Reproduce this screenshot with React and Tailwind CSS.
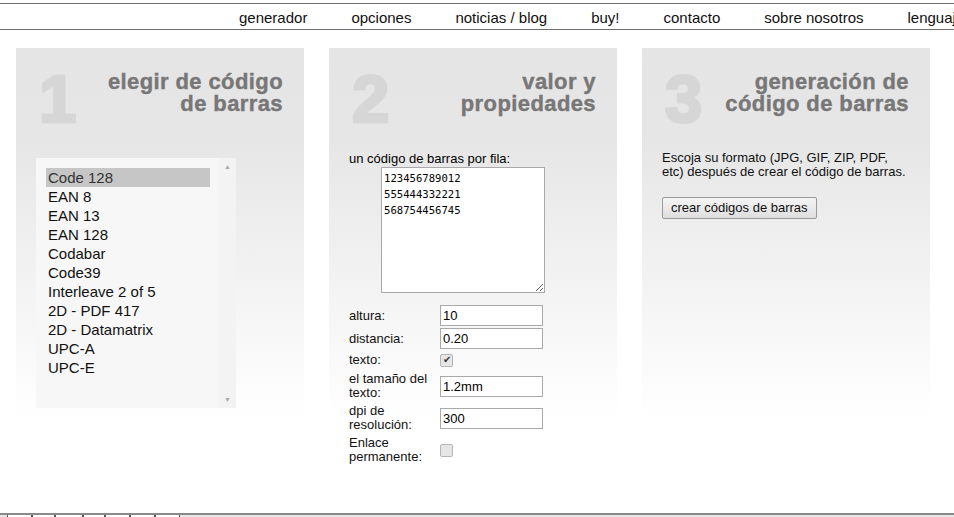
const nav = ['generador', 'opciones', 'noticias / blog', 'buy!', 'contacto', 'sobre nosotros', 'lenguaje'];

const codes = ['Code 128', 'EAN 8', 'EAN 13', 'EAN 128', 'Codabar', 'Code39', 'Interleave 2 of 5', '2D - PDF 417', '2D - Datamatrix', 'UPC-A', 'UPC-E'];

function Panel({ num, title, children }) {
  return (
    <div className="w-[288px] shrink-0 bg-[linear-gradient(#e5e5e5,#e6e6e6_90px,#ffffff_372px)] min-h-[372px]">
      <div className="flex items-start justify-between h-[102px] pl-[21px] pr-[21px] pt-[17px]">
        <div className="text-[67px] leading-none font-bold text-[#d6d6d6] [-webkit-text-stroke:3px_#d6d6d6] pl-[2px]">{num}</div>
        <div className="text-right text-[22px] leading-[22px] font-bold tracking-[0.4px] text-[#777] pt-[6px] [-webkit-text-stroke:0.4px_#777]">
          {title.map((t) => <div key={t}>{t}</div>)}
        </div>
      </div>
      {children}
    </div>
  );
}

function Input({ value }) {
  return (
    <div className="w-[103px] h-[21px] border border-[#a9a9a9] bg-white px-[2px] text-[13px] leading-[19px] text-black">{value}</div>
  );
}

function Check({ checked }) {
  return (
    <div className="w-[13px] h-[13px] rounded-[2px] border border-[#b5b5b5] bg-[#e6e6e6] flex items-center justify-center text-[10px] leading-none text-[#333]">
      {checked ? '✔' : ''}
    </div>
  );
}

export default function App() {
  return (
    <div className="w-[954px] h-[517px] overflow-hidden bg-white flex flex-col font-['Liberation_Sans',Arial,sans-serif] text-black">
      <div className="mt-[3px] h-[27px] border-y border-[#6e6e6e] flex items-center pt-[3px] pl-[217px] whitespace-nowrap overflow-hidden text-[15px] text-[#111]">
        {nav.map((n) => (
          <span key={n} className="px-[22px] shrink-0">{n}</span>
        ))}
      </div>

      <div className="flex gap-[25px] pl-[16px] mt-[18px]">
        <Panel num="1" title={['elegir de código', 'de barras']}>
          <div className="ml-[20px] mt-[8px] w-[200px] h-[250px] bg-[#f7f7f7] flex">
            <div className="flex-1 pt-[10px] pl-[10px] pr-[9px] text-[15px] leading-[19px] text-[#111]">
              {codes.map((c, i) => (
                <div key={c} className={i === 0 ? 'bg-[#c6c6c6] pl-[2px] text-[#333]' : 'pl-[2px]'}>{c}</div>
              ))}
            </div>
            <div className="w-[17px] bg-[#f3f3f3] flex flex-col justify-between items-center py-[5px] text-[#aaa] text-[7px] leading-none">
              <span>▲</span>
              <span>▼</span>
            </div>
          </div>
        </Panel>

        <Panel num="2" title={['valor y', 'propiedades']}>
          <div className="pl-[20px] pt-[1px] text-[13px]">
            <div className="leading-[15px]">un código de barras por fila:</div>
            <textarea
              readOnly
              defaultValue={'123456789012\n555444332221\n568754456745'}
              className="ml-[32px] mt-[1px] block w-[164px] h-[126px] border border-[#a9a9a9] bg-white px-[2px] pt-[2px] text-[10.6px] leading-[16px] font-['DejaVu_Sans_Mono',monospace] text-black outline-none"
            />
            <div className="mt-[12px] grid grid-cols-[91px_auto] gap-y-[2px] items-center leading-[14px] text-[#111]">
              <div>altura:</div>
              <Input value="10" />
              <div>distancia:</div>
              <Input value="0.20" />
              <div className="h-[18px] flex items-center">texto:</div>
              <Check checked />
              <div className="py-[1px]">el tamaño del<br />texto:</div>
              <Input value="1.2mm" />
              <div className="py-[1px]">dpi de<br />resolución:</div>
              <Input value="300" />
              <div className="py-[1px]">Enlace<br />permanente:</div>
              <Check />
            </div>
          </div>
        </Panel>

        <Panel num="3" title={['generación de', 'código de barras']}>
          <div className="pl-[20px] pt-[1px] text-[13px] leading-[14px] text-[#111]">
            <div>Escoja su formato (JPG, GIF, ZIP, PDF,<br />etc) después de crear el código de barras.</div>
            <button className="mt-[18px] h-[22px] px-[8px] border border-[#9a9a9a] rounded-[2px] bg-[linear-gradient(#f5f5f5,#dedede)] text-[13px] text-[#111]">
              crear códigos de barras
            </button>
          </div>
        </Panel>
      </div>

      <div className="mt-auto h-[4px] border-t-2 border-[#8a8a8a] bg-[#e8e8e8] flex pl-[7px]">
        {[25, 23, 28, 22, 25, 25, 25].map((w, i) => (
          <div key={i} className="h-full border-x border-[#555] bg-white" style={{ width: w }} />
        ))}
      </div>
    </div>
  );
}
